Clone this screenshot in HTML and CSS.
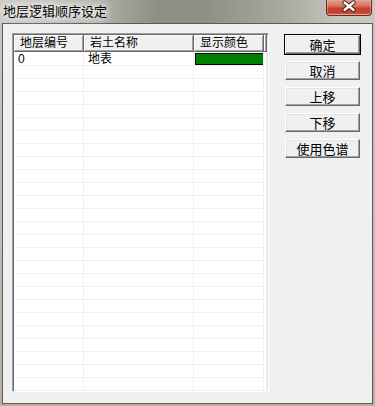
FILE: index.html
```html
<!DOCTYPE html>
<html lang="zh-CN">
<head>
  <meta charset="UTF-8">
  <title>地层逻辑顺序设定</title>
  <link rel="stylesheet" href="styles.css">
</head>
<body>

  <div class="titlebar">
    <span class="title">地层逻辑顺序设定</span>
    <button class="close">
      <svg width="44" height="15" viewBox="0 0 44 15">
        <path d="M17.5 2.5 L26.5 10 M26.5 2.5 L17.5 10" stroke="#4b1f18" stroke-width="4.4" stroke-linecap="round" fill="none"/>
        <path d="M17.5 2.5 L26.5 10 M26.5 2.5 L17.5 10" stroke="#ffffff" stroke-width="2.4" stroke-linecap="round" fill="none"/>
      </svg>
    </button>
  </div>

  <div class="client">
    <div class="listview">
      <table class="grid">
        <colgroup>
          <col class="c1"><col class="c2"><col class="c3"><col class="c4">
        </colgroup>
        <thead>
          <tr><th>地层编号</th><th>岩土名称</th><th>显示颜色</th><th></th></tr>
        </thead>
        <tbody id="rows">
          <tr><td>0</td><td>地表</td><td class="color-cell"><span class="swatch"></span></td><td></td></tr>
        </tbody>
      </table>
    </div>

    <div class="buttons">
      <button class="btn default">确定</button>
      <button class="btn">取消</button>
      <button class="btn">上移</button>
      <button class="btn">下移</button>
      <button class="btn">使用色谱</button>
    </div>
  </div>

  <script>
    // 空白行，填满列表
    const rows = document.getElementById("rows");
    for (let i = 0; i < 26; i++) {
      const tr = document.createElement("tr");
      tr.innerHTML = "<td></td><td></td><td></td><td></td>";
      rows.appendChild(tr);
    }
  </script>
</body>
</html>
```

FILE: styles.css
```css
* {
  box-sizing: border-box;
}

body {
  margin: 0;
  width: 375px;
  height: 406px;
  overflow: hidden;
  background: linear-gradient(to bottom, #c6c5bf 0%, #c2bcb2 55%, #bcae9e 100%);
  font-family: "Liberation Sans", "Noto Sans CJK SC", sans-serif;
  font-size: 12px;
  color: #000;
}

.titlebar {
  height: 23px;
  display: flex;
  align-items: flex-start;
  background: linear-gradient(to right, #c9c9c4 0%, #b9b8b1 22%, #8f8e85 42%, #908f86 55%, #a9a8a0 75%, #c4c3bc 90%, #c8c7c0 100%);
}

.title {
  margin-left: 3px;
  margin-top: 3px;
  line-height: 16px;
  font-size: 13px;
  font-family: "Noto Sans CJK SC", sans-serif;
  color: #000;
  text-shadow: 0 0 6px #fff, 0 0 10px #fff, 0 0 14px rgba(255, 255, 255, 0.8);
}

.close {
  margin-left: auto;
  margin-right: 3px;
  width: 46px;
  height: 16px;
  padding: 0;
  border: 1px solid #6e2a20;
  border-top: none;
  border-radius: 0 0 4px 4px;
  background: linear-gradient(to bottom, #e6a392 0%, #d7725f 40%, #c8432f 55%, #c0402c 85%, #d6806c 100%);
  box-shadow: inset 0 -1px 0 rgba(255, 255, 255, 0.35), inset 1px 0 0 rgba(255, 255, 255, 0.25), inset -1px 0 0 rgba(255, 255, 255, 0.25);
  display: flex;
  align-items: flex-start;
  justify-content: center;
}

.close svg {
  display: block;
}

.client {
  margin: 0 2px;
  height: 381px;
  border: 1px solid #5a5a5a;
  background: #f0f0f0;
  display: flex;
  align-items: flex-start;
  gap: 16px;
  padding: 9px 0 0 9px;
}

.listview {
  width: 257px;
  height: 359px;
  overflow: hidden;
  background: #fff;
  border: 1px solid;
  border-color: #a0a0a0 #fff #fff #a0a0a0;
  box-shadow: inset 1px 1px 0 #696969, inset -1px -1px 0 #e3e3e3;
  padding: 1px;
}

.grid {
  table-layout: fixed;
  border-collapse: separate;
  border-spacing: 0;
  width: 253px;
}

.c1 { width: 70px; }
.c2 { width: 110px; }
.c3 { width: 70px; }
.c4 { width: 3px; }

.grid th {
  height: 17px;
  padding: 0 0 0 6px;
  font-weight: normal;
  text-align: left;
  line-height: 12px;
  white-space: nowrap;
  overflow: hidden;
  background: #f0f0f0;
  border-right: 1px solid #696969;
  border-bottom: 1px solid #696969;
  box-shadow: inset 1px 1px 0 #fff, inset -1px -1px 0 #a0a0a0;
}

.grid td {
  height: 13px;
  padding: 0 0 0 4px;
  line-height: 12px;
  white-space: nowrap;
  overflow: hidden;
  border-right: 1px solid #f0f0f0;
  border-bottom: 1px solid #f0f0f0;
}

.grid td.color-cell {
  padding: 1px 0 0 1px;
  vertical-align: top;
}

.swatch {
  display: block;
  width: 69px;
  height: 12px;
  border: 1px solid #000;
  background: #008000;
}

.buttons {
  display: flex;
  flex-direction: column;
  gap: 7px;
  padding-top: 2px;
}

.btn {
  width: 75px;
  height: 19px;
  padding: 0;
  font-family: "Noto Sans CJK SC", sans-serif;
  font-size: 13px;
  line-height: 13px;
  color: #000;
  background: #f0f0f0;
  border: 1px solid;
  border-color: #fff #696969 #696969 #fff;
  box-shadow: inset -1px -1px 0 #a0a0a0, inset 1px 1px 0 #e3e3e3;
}

.btn.default {
  outline: 1px solid #000;
}
```
